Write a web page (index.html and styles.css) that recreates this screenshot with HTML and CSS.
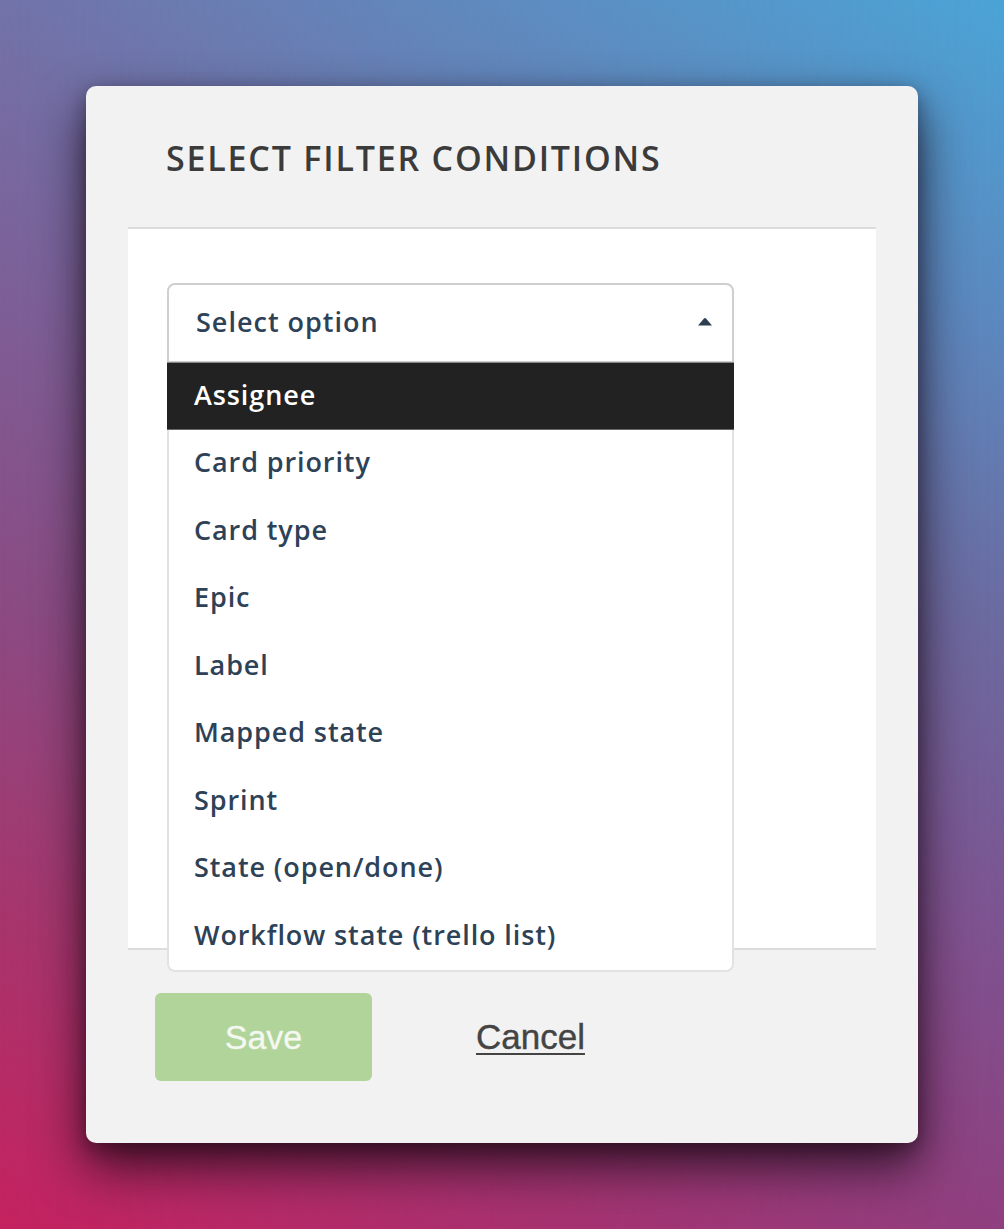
FILE: index.html
```html
<!DOCTYPE html>
<html lang="en">
<head>
<meta charset="utf-8">
<title>Select filter conditions</title>
<link rel="stylesheet" href="styles.css">
</head>
<body>
<div class="backdrop">
  <div class="modal">
    <div class="modal-header">
      <h2 class="modal-title">SELECT FILTER CONDITIONS</h2>
    </div>
    <div class="modal-body">
      <div class="select">
        <div class="select-control">
          <span class="select-placeholder">Select option</span>
          <svg class="select-caret" width="16" height="9" viewBox="0 0 16 9"><path d="M1 8.5 L7 1.6 Q8 0.6 9 1.6 L15 8.5 Z" fill="#2c3e50"/></svg>
        </div>
        <ul class="select-menu">
          <li class="option active">Assignee</li>
          <li class="option">Card priority</li>
          <li class="option">Card type</li>
          <li class="option">Epic</li>
          <li class="option">Label</li>
          <li class="option">Mapped state</li>
          <li class="option">Sprint</li>
          <li class="option">State (open/done)</li>
          <li class="option">Workflow state (trello list)</li>
        </ul>
      </div>
    </div>
    <div class="modal-footer">
      <button class="btn-save" type="button">Save</button>
      <a class="btn-cancel" href="#">Cancel</a>
    </div>
  </div>
</div>
</body>
</html>
```

FILE: styles.css
```css
html, body {
  margin: 0;
  padding: 0;
}

body {
  width: 1004px;
  height: 1229px;
  overflow: hidden;
}

.backdrop {
  position: relative;
  width: 1004px;
  height: 1229px;
  padding: 86px 0 0 86px;
  box-sizing: border-box;
  background: linear-gradient(to bottom, #7273a9 0%, #7e5e96 25%, #8c4a82 50%, #a8356c 75%, #c5225f 100%);
}

.backdrop::before {
  content: "";
  position: absolute;
  inset: 0;
  background: linear-gradient(to bottom, #4ba4d6 0%, #5a8ac0 25%, #6a6ba0 50%, #7c5491 75%, #8f3f7f 100%);
  -webkit-mask-image: linear-gradient(to right, transparent 0%, black 100%);
  mask-image: linear-gradient(to right, transparent 0%, black 100%);
}

.modal {
  position: relative;
  width: 832px;
  height: 1057px;
  background: #f2f2f2;
  border-radius: 10px;
  box-shadow: 0 24px 50px rgba(20, 5, 15, 0.75), 0 6px 18px rgba(20, 5, 15, 0.35);
  display: flex;
  flex-direction: column;
  font-family: "Open Sans", "Liberation Sans", sans-serif;
}

.modal-header {
  height: 141px;
  padding-left: 80px;
  box-sizing: border-box;
  display: flex;
  align-items: center;
}

.modal-title {
  margin: 0;
  padding-top: 3px;
  font-size: 34px;
  font-weight: 600;
  color: #3b3b3b;
  letter-spacing: 1.8px;
  white-space: nowrap;
}

.modal-body {
  margin: 0 42px;
  height: 723px;
  box-sizing: border-box;
  background: #ffffff;
  border-top: 2px solid #dcdcdc;
  border-bottom: 2px solid #dcdcdc;
  padding: 54px 0 0 39px;
}

.select {
  position: relative;
  width: 567px;
}

.select-control {
  height: 79px;
  box-sizing: border-box;
  border: 2px solid #cfcfcf;
  border-bottom-width: 1px;
  border-radius: 8px 8px 0 0;
  display: flex;
  align-items: center;
  justify-content: space-between;
  padding: 0 19px 0 27px;
  background: #fff;
}

.select-placeholder {
  font-size: 27px;
  font-weight: 600;
  letter-spacing: 1px;
  color: #2e4257;
  margin-top: -3px;
}

.select-caret {
  display: block;
  margin-bottom: 4px;
}

.select-menu {
  position: absolute;
  left: 0;
  top: 100%;
  width: 100%;
  margin: 0;
  padding: 0;
  list-style: none;
  background: #fff;
  box-sizing: border-box;
  border: 2px solid #e2e2e2;
  border-top: 0;
  border-radius: 0 0 8px 8px;
  z-index: 2;
}

.option {
  height: 67.5px;
  display: flex;
  align-items: center;
  padding-left: 25px;
  padding-bottom: 3px;
  box-sizing: border-box;
  font-size: 27px;
  font-weight: 600;
  letter-spacing: 0.9px;
  color: #2e4257;
}

.option.active {
  background: #222222;
  color: #ffffff;
  margin: 0 -2px 0 -2px;
  padding-left: 27px;
  border-top: 1px solid #888;
  border-bottom: 1px solid #666;
}

.modal-footer {
  display: flex;
  align-items: center;
  padding: 43px 0 0 69px;
}

.btn-save {
  width: 217px;
  height: 88px;
  border: 0;
  border-radius: 6px;
  background: #b0d499;
  color: #f4f8f1;
  font-family: "Liberation Sans", Arial, sans-serif;
  font-size: 34px;
  padding: 0;
  -webkit-text-stroke: 0.3px #f4f8f1;
}

.btn-cancel {
  margin-left: 104px;
  font-family: "Liberation Sans", Arial, sans-serif;
  font-size: 35px;
  color: #444444;
  text-decoration: underline;
  text-underline-offset: 4px;
  text-decoration-thickness: 2px;
  -webkit-text-stroke: 0.4px #444444;
}
```
